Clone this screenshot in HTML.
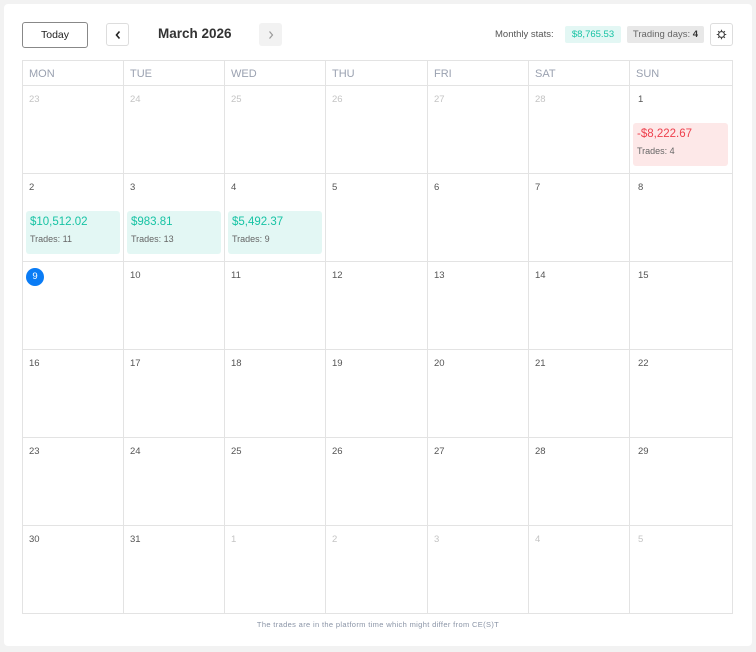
<!DOCTYPE html>
<html><head><meta charset="utf-8"><style>
*{box-sizing:border-box;margin:0;padding:0}
body{width:756px;height:652px;background:#f2f2f2;font-family:"Liberation Sans",sans-serif;position:relative;overflow:hidden}
.card{position:absolute;left:4px;top:4px;width:748px;height:642px;background:#fff;border-radius:4px}
.abs{position:absolute}
.today{left:22px;top:22px;width:66px;height:26px;border:1px solid #888;border-radius:3px;font-size:10.5px;color:#222;text-align:center;line-height:24px}
.nav{top:23px;width:23px;height:23px;border-radius:3px}
.nav svg{display:block;margin:6px auto 0}
.title{left:158px;top:26px;font-size:13.5px;font-weight:bold;color:#333}
.grid{left:22px;top:60px;width:711px;height:554px;border:1px solid #e3e3e3}
.hd{position:absolute;top:0;height:26px;font-size:11px;color:#9aa1b0;padding:7px 0 0 6px}
.vl{position:absolute;top:0;width:1px;height:552px;background:#e3e3e3}
.hl{position:absolute;left:0;width:709px;height:1px;background:#e3e3e3}
.d{position:absolute;font-size:9.5px;color:#555}
.d.o{color:#c4c4c4}
.b{position:absolute;height:43px;border-radius:3px;padding:5px 0 0 4px}
.b .v{font-size:11.5px}
.b .t{font-size:9px;color:#666;margin-top:6px}
.g{background:#e3f7f4}.g .v{color:#17c3a4}
.r{background:#fde8e8}.r .v{color:#ee3f4c}
</style></head><body>
<div class="card"></div>
<div class="abs today">Today</div>
<div class="abs nav" style="left:106px;border:1px solid #ddd"><svg width="10" height="10" viewBox="0 0 10 10"><path d="M6.5 1.5L3.5 5l3 3.5" fill="none" stroke="#222" stroke-width="1.6"/></svg></div>
<div class="abs title">March 2026</div>
<div class="abs nav" style="left:259px;background:#f2f2f2"><svg width="10" height="10" viewBox="0 0 10 10" style="margin-top:7px"><path d="M3.5 1.5L6.5 5l-3 3.5" fill="none" stroke="#999" stroke-width="1.2"/></svg></div>
<div class="abs" style="left:495px;top:29px;font-size:9.5px;color:#555">Monthly stats:</div>
<div class="abs" style="left:565px;top:26px;width:56px;height:17px;background:#e3f7f4;color:#17c3a4;font-size:9.5px;text-align:center;line-height:17px;border-radius:2px">$8,765.53</div>
<div class="abs" style="left:627px;top:26px;width:77px;height:17px;background:#e8e8e8;color:#666;font-size:9.5px;text-align:center;line-height:17px;border-radius:2px">Trading days: <b style="color:#333">4</b></div>
<div class="abs" style="left:710px;top:23px;width:23px;height:23px;border:1px solid #ddd;border-radius:3px"><svg width="11" height="11" viewBox="0 0 12 12" style="display:block;margin:5px auto 0"><circle cx="6" cy="6" r="3.2" fill="none" stroke="#444" stroke-width="1.2"/><path d="M6 .8v1.6M6 9.6v1.6M.8 6h1.6M9.6 6h1.6M2.3 2.3l1.1 1.1M8.6 8.6l1.1 1.1M2.3 9.7l1.1-1.1M8.6 3.4l1.1-1.1" stroke="#444" stroke-width="1.2"/></svg></div>
<div class="abs grid">
<div class="hd" style="left:0">MON</div><div class="hd" style="left:101px">TUE</div><div class="hd" style="left:202px">WED</div><div class="hd" style="left:303px">THU</div><div class="hd" style="left:405px">FRI</div><div class="hd" style="left:506px">SAT</div><div class="hd" style="left:607px">SUN</div>
<div class="vl" style="left:100px"></div><div class="vl" style="left:201px"></div><div class="vl" style="left:302px"></div><div class="vl" style="left:404px"></div><div class="vl" style="left:505px"></div><div class="vl" style="left:606px"></div>
<div class="hl" style="top:24px"></div><div class="hl" style="top:112px"></div><div class="hl" style="top:200px"></div><div class="hl" style="top:288px"></div><div class="hl" style="top:376px"></div><div class="hl" style="top:464px"></div>
</div>
<div id="days"></div>
<div class="b g abs" style="left:26px;top:211px;width:94px"><div class="v">$10,512.02</div><div class="t">Trades: 11</div></div>
<div class="b g abs" style="left:127px;top:211px;width:94px"><div class="v">$983.81</div><div class="t">Trades: 13</div></div>
<div class="b g abs" style="left:228px;top:211px;width:94px"><div class="v">$5,492.37</div><div class="t">Trades: 9</div></div>
<div class="b r abs" style="left:633px;top:123px;width:95px"><div class="v">-$8,222.67</div><div class="t">Trades: 4</div></div>
<div class="abs" style="left:26px;top:268px;width:18px;height:18px;border-radius:50%;background:#0a7cf5;color:#fff;font-size:9.5px;text-align:center;line-height:18px">9</div>
<div class="abs" style="left:0;width:756px;top:620px;text-align:center;font-size:7.5px;letter-spacing:.35px;color:#8a94a6">The trades are in the platform time which might differ from CE(S)T</div>
<script>
var cols=[29,130,231,332,434,535,638],rows=[94,182,270,358,446,534];
var data=[["23o","24o","25o","26o","27o","28o","1"],["2","3","4","5","6","7","8"],["","10","11","12","13","14","15"],["16","17","18","19","20","21","22"],["23","24","25","26","27","28","29"],["30","31","1o","2o","3o","4o","5o"]];
var h="";data.forEach(function(r,i){r.forEach(function(d,j){if(!d)return;var o=d.indexOf("o")>0;h+='<div class="d'+(o?' o':'')+'" style="left:'+cols[j]+'px;top:'+rows[i]+'px">'+d.replace("o","")+'</div>';});});
document.getElementById("days").innerHTML=h;
</script>
</body></html>
